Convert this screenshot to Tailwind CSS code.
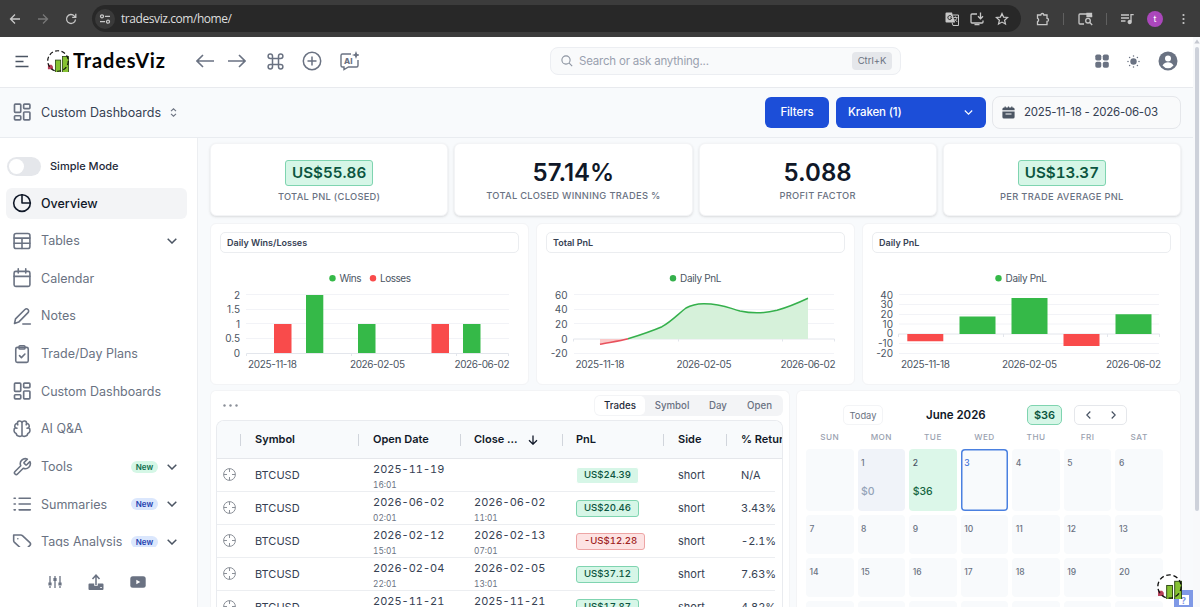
<!DOCTYPE html>
<html lang="en">
  <head>
    <meta charset="UTF-8" />
    <title>Overview - TradesViz</title>
    <script src="https://cdn.jsdelivr.net/npm/@tailwindcss/browser@4"></script>
  </head>
  <body class="flex h-[607px] w-[1200px] flex-col overflow-hidden bg-[#f8fafc] font-['Inter',sans-serif] text-gray-800">

    <!-- Shared symbols -->
    <svg class="hidden">
      <symbol id="logo" viewBox="0 0 24 24">
        <clipPath id="disc"><circle cx="12" cy="12" r="11.5" /></clipPath>
        <g clip-path="url(#disc)">
          <path d="M1 16h4l1.500 2v3H1z" fill="#b8405a" />
          <rect x="9.3" y="11" width="5.6" height="14" fill="#86c232" stroke="#2c4514" stroke-width=".9" />
          <rect x="17" y="7" width="6.5" height="18" fill="#86c232" stroke="#2c4514" stroke-width=".9" />
        </g>
        <circle cx="12" cy="12" r="11.2" fill="none" stroke="#111" stroke-width="1.300" stroke-dasharray="4.4 2.64" />
      </symbol>
      <symbol id="grid" viewBox="0 0 24 24" fill="none" stroke="currentColor" stroke-width="2" stroke-linejoin="round">
        <rect x="3" y="2.500" width="7.500" height="10" rx="1" /><rect x="14" y="2.500" width="7.500" height="5.500" rx="1" />
        <rect x="3" y="16.500" width="7.500" height="5" rx="1" /><rect x="14" y="12" width="7.500" height="9.500" rx="1" />
      </symbol>
    </svg>

    <!-- Browser bar -->
    <div class="flex h-[37px] shrink-0 items-center bg-[#3c3c3c] text-[#c7c7c7]">
      <svg class="ml-[9px] h-3 w-3" fill="none" stroke="currentColor" stroke-width="1.300" viewBox="0 0 12 12"><path d="M11 6H1.500M6 1.500L1.500 6 6 10.500" /></svg>
      <svg class="ml-[16px] h-3 w-3 text-[#777]" fill="none" stroke="currentColor" stroke-width="1.300" viewBox="0 0 12 12"><path d="M1 6h9.500M6 1.500L10.500 6 6 10.500" /></svg>
      <svg class="ml-[16px] h-3 w-3" fill="none" stroke="currentColor" stroke-width="1.300" viewBox="0 0 12 12"><path d="M10.500 6.500A4.500 4.500 0 1 1 9.300 2.900L10.700 4.200M10.800 .8v3.600H7.200" /></svg>
      <div class="ml-[15px] flex h-[27px] w-[929px] items-center rounded-full bg-[#282828] pl-[3px] pr-[12px]">
        <div class="flex h-5 w-5 items-center justify-center rounded-full bg-[#3a3a3a]">
          <svg class="h-3 w-3" fill="none" stroke="currentColor" stroke-width="1.300" viewBox="0 0 12 12"><circle cx="3" cy="3.300" r="1.500" /><path d="M6 3.300h5M1 8.700h5" /><circle cx="9" cy="8.700" r="1.500" /></svg>
        </div>
        <span class="ml-1.5 font-['Open_Sans',sans-serif] text-[12px] tracking-[-.43px] text-[#dedede]">tradesviz.com/home/</span>
        <svg class="ml-auto h-[14px] w-[14px]" viewBox="0 0 14 14"><path d="M1.500 .5h5.500l3 10H1.500a1 1 0 0 1-1-1v-8a1 1 0 0 1 1-1z" fill="#c7c7c7" /><path d="M6.600 4.600A2 2 0 1 0 6.800 6H5" fill="none" stroke="#282828" /><path d="M7.800 3h5.700v10.500H8L7 10.500" fill="none" stroke="#c7c7c7" /><path d="M8.500 5.500h4M10.500 4.500v1M12 5.500c-.5 2-1.500 3-3 4M9.500 7l2.700 3" fill="none" stroke="#c7c7c7" stroke-width=".9" /></svg>
        <svg class="ml-[11px] h-[14px] w-[14px]" fill="none" stroke="#c7c7c7" stroke-width="1.300" viewBox="0 0 14 14"><path d="M7 2H2a1 1 0 0 0-1 1v7a1 1 0 0 0 1 1h10a1 1 0 0 0 1-1V8.500M4.500 12.700h5M10.500 .5v6M8 4.300l2.500 2.500L13 4.300" /></svg>
        <svg class="ml-[11px] h-[14px] w-[14px]" fill="none" stroke="#c7c7c7" stroke-width="1.200" viewBox="0 0 14 14"><path d="M7 1.500l1.600 3.600 4 .4-3 2.700.9 3.900L7 10.100l-3.500 2 .9-3.900-3-2.700 4-.4z" /></svg>
      </div>
      <svg class="ml-[15px] h-[14px] w-[14px]" fill="none" stroke="currentColor" stroke-width="1.300" viewBox="0 0 14 14"><path d="M1.500 3h3.300a1.500 1.500 0 0 1 3 0H11v3.400a1.500 1.500 0 0 1 0 3V12.700H1.500V9.600a1.700 1.700 0 0 0 0-3.200z" /></svg>
      <div class="ml-[13px] h-3 w-px bg-[#606060]"></div>
      <svg class="ml-[14px] h-[14px] w-[15px]" fill="none" stroke="currentColor" stroke-width="1.300" viewBox="0 0 15 14"><path d="M6 12H2a1 1 0 0 1-1-1V3a1 1 0 0 1 1-1h10.500a1 1 0 0 1 1 1v2" /><path d="M9 1.500h4.500v3H9z" fill="currentColor" /><circle cx="10" cy="8.700" r="2.300" /><path d="M11.800 10.500l2.400 2.500" /></svg>
      <div class="ml-[13px] h-3 w-px bg-[#606060]"></div>
      <svg class="ml-[14px] h-3 w-[13px]" fill="none" stroke="currentColor" stroke-width="1.300" viewBox="0 0 13 12"><path d="M0 2h8M0 5h8M0 8h4.500M10 8.500V1.700h2.700" /><circle cx="8.700" cy="9" r="1.500" fill="currentColor" /></svg>
      <div class="ml-[13px] flex h-4 w-4 items-center justify-center rounded-full bg-[#ab47bc] text-[9px] leading-none text-white">t</div>
      <svg class="ml-[18px] h-3 w-[5px]" fill="currentColor" viewBox="0 0 5 12"><circle cx="2.500" cy="2" r="1.100" /><circle cx="2.500" cy="6" r="1.100" /><circle cx="2.500" cy="10" r="1.100" /></svg>
    </div>

    <div class="flex min-h-0 flex-1">
      <div class="flex w-[1193px] flex-col">

        <!-- Header -->
        <header class="flex h-[51px] shrink-0 items-center border-b border-[#e8eaee] bg-white pb-[2px] text-gray-500">
          <svg class="ml-[15px] h-[13px] w-[14px]" fill="none" stroke="#4b5563" stroke-width="1.700" viewBox="0 0 14 13"><path d="M.5 1.500h12.500M.5 6.500h8M.5 11.500h13" /></svg>
          <svg class="ml-[18px] h-[22px] w-[22px]"><use href="#logo" /></svg>
          <svg class="ml-1 h-6 w-[93px]"><text x="0" y="19" font-family="Lato, sans-serif" font-weight="700" font-size="20" fill="#050505" textLength="92">TradesViz</text></svg>
          <svg class="ml-[30px] h-[14px] w-[18px]" fill="none" stroke="currentColor" stroke-width="1.600" viewBox="0 0 18 14"><path d="M18 7H1M7 1L1 7l6 6" /></svg>
          <svg class="ml-[14px] h-[14px] w-[18px]" fill="none" stroke="currentColor" stroke-width="1.600" viewBox="0 0 18 14"><path d="M0 7h17M11 1l6 6-6 6" /></svg>
          <svg class="ml-[21px] h-[17px] w-[17px]" fill="none" stroke="currentColor" stroke-width="1.500" viewBox="0 0 17 17"><path d="M5.500 5.500h6v6h-6zM5.500 5.500H3.300a2.200 2.200 0 1 1 2.200-2.200zM11.500 5.500V3.300a2.200 2.200 0 1 1 2.200 2.200zM11.500 11.500h2.200a2.200 2.200 0 1 1-2.200 2.200zM5.500 11.500v2.200a2.200 2.200 0 1 1-2.200-2.200z" /></svg>
          <svg class="ml-[18px] h-5 w-5" fill="none" stroke="currentColor" stroke-width="1.500" viewBox="0 0 20 20"><circle cx="10" cy="10" r="8.700" /><path d="M10 5.500v9M5.500 10h9" /></svg>
          <svg class="ml-[17px] h-5 w-5" fill="none" stroke="currentColor" stroke-width="1.400" viewBox="0 0 20 20">
            <path d="M12 3H3.500A1.500 1.500 0 0 0 2 4.500v10A1.500 1.500 0 0 0 3.500 16H5v2.500L9.500 16h8a1.500 1.500 0 0 0 1.500-1.500V9" />
            <path d="M17 0l1.100 2.900L21 4l-2.900 1.100L17 8l-1.100-2.900L13 4l2.900-1.100z" fill="currentColor" stroke="none" />
            <text x="5" y="12.500" font-size="8" font-weight="800" fill="currentColor" stroke="none">AI</text>
          </svg>
          <div class="ml-[191px] flex h-[28px] w-[351px] items-center rounded-lg border border-[#eceef2] bg-[#f9fafb] pl-[10px] pr-[8px]">
            <svg class="h-3 w-3" fill="none" stroke="#8b93a0" stroke-width="1.100" viewBox="0 0 12 12"><circle cx="5" cy="5" r="4.100" /><path d="M8.200 8.200l3 3" /></svg>
            <span class="ml-[6px] pt-[2px] text-[11.500px] tracking-[-.2px] text-gray-400">Search or ask anything...</span>
            <span class="ml-auto flex h-[18px] w-10 items-center justify-center rounded bg-gray-200 pt-px text-[9.500px] text-gray-500">Ctrl+K</span>
          </div>
          <svg class="ml-[194px] h-[14px] w-[14px]" fill="currentColor" viewBox="0 0 14 14"><rect x=".3" y=".5" width="6" height="6" rx="1.700" /><rect x="7.800" y=".5" width="6" height="6" rx="1.700" /><rect x=".3" y="7.700" width="6" height="6" rx="1.700" /><rect x="7.800" y="7.700" width="6" height="6" rx="1.700" /></svg>
          <svg class="ml-[18px] h-[13px] w-[13px]" viewBox="0 0 13 13"><circle cx="6.500" cy="6.500" r="3.200" fill="currentColor" /><path d="M6.500 1h.01M6.500 12h.01M1 6.500h.01M12 6.500h.01M2.600 2.600h.01M10.400 2.600h.01M2.600 10.400h.01M10.400 10.400h.01" stroke="currentColor" stroke-width="1.500" stroke-linecap="round" /></svg>
          <svg class="ml-[18px] h-5 w-5" viewBox="0 0 20 20"><circle cx="10" cy="10" r="9.500" fill="currentColor" /><circle cx="10" cy="7.500" r="3" fill="#fff" /><path d="M4.500 14.500c1.300-2.300 3.300-3.200 5.500-3.200s4.200.9 5.500 3.200a7 7 0 0 1-11 0z" fill="#fff" /></svg>
        </header>

        <!-- Dashboard bar -->
        <div class="flex h-[50px] shrink-0 items-center border-b border-[#e9ecf0] pb-px">
          <svg class="ml-[12px] h-[20px] w-[20px] text-gray-500"><use href="#grid" /></svg>
          <span class="ml-[9px] pt-[2px] text-[12.500px] text-gray-700">Custom Dashboards</span>
          <svg class="ml-[9px] h-[9px] w-[7px]" fill="none" stroke="#6b7280" stroke-width="1.100" viewBox="0 0 7 9"><path d="M1 3.200L3.500 .8 6 3.200M1 5.800l2.500 2.400L6 5.800" /></svg>
          <button class="ml-auto h-[31px] w-[64px] rounded-md bg-[#1c4ed8] pt-[2px] text-[11.500px] font-medium tracking-[-.1px] text-white">Filters</button>
          <button class="ml-[7px] flex h-[31px] w-[150px] items-center justify-between rounded-md bg-[#1c4ed8] pl-3 pr-[13px] text-[11.500px] font-medium tracking-[-.15px] text-white">
            <span class="pt-[2px]">Kraken (1)</span>
            <svg class="h-[5px] w-[9px]" fill="none" stroke="currentColor" stroke-width="1.100" viewBox="0 0 9 5"><path d="M.8 .5l3.700 3.700L8.200 .5" /></svg>
          </button>
          <div class="mr-[12px] ml-[6px] flex h-[33px] w-[189px] items-center rounded-lg border border-gray-200 bg-[#f9fafb] pl-[9px]">
            <svg class="h-[13px] w-[13px]" viewBox="0 0 13 13"><path d="M2 1.500h9a1.600 1.600 0 0 1 1.600 1.500v1.300H.4V3A1.600 1.600 0 0 1 2 1.500zM.4 5.500h12.200v5.500a1.600 1.600 0 0 1-1.600 1.600H2A1.600 1.600 0 0 1 .4 11z" fill="#4b5563" /><path d="M3.200 .4v1.500M6.500 .4v1.500M9.800 .4v1.500" stroke="#4b5563" stroke-width="1.200" /><path d="M3.500 8h6" stroke="#fff" /></svg>
            <span class="ml-[9px] pt-[2px] text-[11.500px] tracking-[-.25px] text-gray-700">2025-11-18 - 2026-06-03</span>
          </div>
        </div>

        <div class="flex min-h-0 flex-1">

          <!-- Sidebar -->
          <aside class="flex w-[198px] shrink-0 flex-col border-r border-[#eceef1] bg-white">
            <div class="flex h-[55px] shrink-0 items-center pt-[1px] pl-[7px]">
              <div class="flex h-[19px] w-[34px] items-center rounded-full bg-gray-200 pl-[2px]"><div class="h-[15px] w-[15px] rounded-full bg-white"></div></div>
              <span class="ml-[9px] text-[11px] font-medium text-gray-800">Simple Mode</span>
            </div>
            <nav id="menu" class="-mt-[5.500px] flex h-[359px] shrink-0 flex-col gap-[6.350px] overflow-hidden pr-[10px] pl-[6px]"></nav>
            <div class="flex flex-1 items-center justify-center gap-[26px] pt-[10px] pr-[3px] text-gray-500">
              <svg class="h-[14px] w-[14px]" fill="none" stroke="currentColor" stroke-width="1.300" viewBox="0 0 14 14"><path d="M2 1v7M2 11v2M7 1v2M7 6v7M12 1v7M12 11v2" /><path d="M2 7.500v3M7 3v3M12 7.500v3" stroke-width="3.200" /></svg>
              <svg class="h-4 w-4" viewBox="0 0 16 16"><path d="M8 11V1.500M4.500 5L8 1.200 11.500 5" fill="none" stroke="currentColor" stroke-width="1.500" /><path d="M1.500 9.500h4.700v2.300h3.600V9.500h4.700a1 1 0 0 1 1 1V15a1 1 0 0 1-1 1h-13a1 1 0 0 1-1-1v-4.500a1 1 0 0 1 1-1z" fill="currentColor" /><path d="M12.300 13.500h1.500" stroke="#fff" /></svg>
              <svg class="h-[12px] w-4" viewBox="0 0 16 12"><rect x=".3" y=".3" width="15.400" height="11.400" rx="2.500" fill="currentColor" /><path d="M6.300 3.700v4.600L10.300 6z" fill="#fff" /></svg>
            </div>
          </aside>

          <!-- Main content -->
          <main class="flex min-w-0 flex-1 flex-col pt-[5px] pr-[12px] pl-[12px]">

            <section class="grid h-[73px] shrink-0 grid-cols-4 gap-[6px] text-center">
              <div class="flex flex-col items-center rounded-md border border-gray-100 bg-white pt-[16px] shadow-sm">
                <div class="flex h-[26px] items-center rounded-[3px] border border-[#7fd4b0] bg-[#d6f6e7] px-[6px] pt-px text-[15.200px] font-semibold text-[#0c5540] tabular-nums">US$55.86</div>
                <div class="mt-[4px] text-[9.300px] leading-[13px] font-medium tracking-[.3px] text-gray-500">TOTAL PNL (CLOSED)</div>
              </div>
              <div class="flex flex-col items-center rounded-md border border-gray-100 bg-white pt-[16px] shadow-sm">
                <div class="text-[24px] leading-[26px] font-semibold text-gray-900">57.14%</div>
                <div class="mt-[3px] text-[9.300px] leading-[13px] font-medium tracking-[.3px] text-gray-500">TOTAL CLOSED WINNING TRADES %</div>
              </div>
              <div class="flex flex-col items-center rounded-md border border-gray-100 bg-white pt-[16px] shadow-sm">
                <div class="text-[24px] leading-[26px] font-semibold text-gray-900">5.088</div>
                <div class="mt-[3px] text-[9.300px] leading-[13px] font-medium tracking-[.3px] text-gray-500">PROFIT FACTOR</div>
              </div>
              <div class="flex flex-col items-center rounded-md border border-gray-100 bg-white pt-[16px] shadow-sm">
                <div class="flex h-[26px] items-center rounded-[3px] border border-[#7fd4b0] bg-[#d6f6e7] px-[6px] pt-px text-[15.200px] font-semibold text-[#0c5540] tabular-nums">US$13.37</div>
                <div class="mt-[4px] text-[9.300px] leading-[13px] font-medium tracking-[.3px] text-gray-500">PER TRADE AVERAGE PNL</div>
              </div>
            </section>

            <!-- Charts -->
            <section class="mt-[7px] grid h-[162px] shrink-0 grid-cols-3 gap-[7px]">
              <div class="rounded-md border border-gray-100 bg-white pt-[8px]">
                <div class="mx-[9px] flex h-[21px] items-center rounded-[5px] border border-[#ebedf0] pl-[6px] text-[9px] font-semibold text-gray-700">Daily Wins/Losses</div>
                <svg class="h-[130px] w-[318px]" viewBox="211 253 318 130" font-size="10" fill="#4b5563">
                  <circle cx="332.500" cy="278.300" r="3.200" fill="#35b948" /><text x="339.500" y="281.500" textLength="22">Wins</text>
                  <circle cx="373" cy="278.300" r="3.200" fill="#f94b4b" /><text x="380" y="281.500" textLength="31">Losses</text>
                  <path d="M246 294.500h263M246 309.500h263M246 323.500h263M246 338.500h263" stroke="#f2f3f7" />
                  <path d="M246.500 356v-2.500h262v2.500M351.500 353v3M456.500 353v3" fill="none" stroke="#e3e6ec" />
                  <g text-anchor="end"><text x="240" y="298.500">2</text><text x="240" y="313">1.5</text><text x="240" y="327.500">1</text><text x="240" y="342.200">0.5</text><text x="240" y="356.700">0</text></g>
                  <path d="M274 324h17.500v29H274zM431.500 324H449v29h-17.500z" fill="#f94b4b" />
                  <path d="M306 295h17.300v58H306zM358 324h17.500v29H358zM463 324h17.500v29H463z" fill="#35b948" />
                  <text x="248" y="368" textLength="49">2025-11-18</text><text x="350" y="368" textLength="55">2026-02-05</text><text x="454.500" y="368" textLength="55">2026-06-02</text>
                </svg>
              </div>
              <div class="rounded-md border border-gray-100 bg-white pt-[8px]">
                <div class="mx-[9px] flex h-[21px] items-center rounded-[5px] border border-[#ebedf0] pl-[6px] text-[9px] font-semibold text-gray-700">Total PnL</div>
                <svg class="h-[130px] w-[318px]" viewBox="537 253 318 130" font-size="10" fill="#4b5563">
                  <circle cx="673" cy="278.300" r="3.200" fill="#35b04c" /><text x="680" y="281.500" textLength="41.500">Daily PnL</text>
                  <path d="M574 294.500h260M574 309.500h260M574 323.500h260M574 353.500h260" stroke="#f2f3f7" />
                  <path d="M573.500 341.500v-2.500h261v2.500M678.500 339v2.500M782.500 339v2.500" fill="none" stroke="#e3e6ec" />
                  <g text-anchor="end"><text x="567.500" y="298.500">60</text><text x="567.500" y="313">40</text><text x="567.500" y="327.700">20</text><text x="567.500" y="342.500">0</text><text x="567.500" y="356.800">-20</text></g>
                  <path d="M600 339v5.300C609 342.500 620 341 628 339z" fill="#fbc9c9" />
                  <path d="M628 339C640 335 652 331 662 326.700C672 321 678 314 686 308C692 304.500 697 303.800 703.500 303.700C722 303.500 730 308.500 740 311C750 313.200 763 313.800 777 310.300C789 307 798 303 808 298.300V339z" fill="#d6f1da" />
                  <path d="M600 344.300C609 342.500 620 341 628 338.800" fill="none" stroke="#e8505b" stroke-width="1.500" />
                  <path d="M628 338.800C640 335 652 331 662 326.700C672 321 678 314 686 308C692 304.500 697 303.800 703.500 303.700C722 303.500 730 308.500 740 311C750 313.200 763 313.800 777 310.300C789 307 798 303 808 298.300" fill="none" stroke="#35b04c" stroke-width="1.500" />
                  <text x="575.500" y="368" textLength="49">2025-11-18</text><text x="676.500" y="368" textLength="55">2026-02-05</text><text x="780.500" y="368" textLength="55">2026-06-02</text>
                </svg>
              </div>
              <div class="rounded-md border border-gray-100 bg-white pt-[8px]">
                <div class="mx-[9px] flex h-[21px] items-center rounded-[5px] border border-[#ebedf0] pl-[6px] text-[9px] font-semibold text-gray-700">Daily PnL</div>
                <svg class="h-[130px] w-[318px]" viewBox="863 253 318 130" font-size="10" fill="#4b5563">
                  <circle cx="998.500" cy="278.300" r="3.200" fill="#35b948" /><text x="1005.500" y="281.500" textLength="41.500">Daily PnL</text>
                  <path d="M899 294.500h260M899 304.500h260M899 314.500h260M899 324h260M899 343.500h260M899 353.500h260" stroke="#f2f3f7" />
                  <path d="M898.500 337v-3h261v3M1003.500 334v3M1107.500 334v3" fill="none" stroke="#e3e6ec" />
                  <g text-anchor="end"><text x="893" y="298.500">40</text><text x="893" y="308.300">30</text><text x="893" y="318">20</text><text x="893" y="327.700">10</text><text x="893" y="337.300">0</text><text x="893" y="347">-10</text><text x="893" y="356.700">-20</text></g>
                  <path d="M907.300 334h36v7.300h-36zM1063.500 334h36v12h-36z" fill="#f94b4b" />
                  <path d="M959.500 316.500h36V334h-36zM1011.500 298h36v36h-36zM1115.500 314.200h36V334h-36z" fill="#35b948" />
                  <text x="901" y="368" textLength="49">2025-11-18</text><text x="1002" y="368" textLength="55">2026-02-05</text><text x="1106" y="368" textLength="55">2026-06-02</text>
                </svg>
              </div>
            </section>

            <section class="mt-[5px] flex min-h-0 flex-1 gap-[6px]">

              <!-- Trades table -->
              <div class="flex w-[580px] flex-col rounded-t-md border border-b-0 border-gray-100 bg-white pr-[6px] pl-[5px]">
                <div class="flex h-[29px] shrink-0 items-center justify-between pl-[7px]">
                  <svg class="h-[3px] w-[15px]" fill="#8a8f98" viewBox="0 0 15 3"><circle cx="1.500" cy="1.500" r="1.200" /><circle cx="7.500" cy="1.500" r="1.200" /><circle cx="13.500" cy="1.500" r="1.200" /></svg>
                  <div class="flex h-[21px] items-center rounded-md bg-gray-100 p-px text-[9.700px] font-medium text-gray-500">
                    <span class="flex h-[19px] w-[50px] items-center justify-center rounded-[5px] bg-white pt-[2px] text-gray-800">Trades</span>
                    <span class="w-[54px] pt-[2px] text-center">Symbol</span>
                    <span class="w-[38px] pt-[2px] text-center">Day</span>
                    <span class="w-[45px] pt-[2px] text-center">Open</span>
                  </div>
                </div>
                <div class="min-h-0 flex-1 overflow-hidden rounded-t-lg border border-b-0 border-[#e9ebef]">
                  <div class="flex h-[38px] items-center border-b border-gray-200 bg-[#f8fafc] text-[11px] font-semibold text-gray-900">
                    <span class="h-3 w-[24px] shrink-0 border-r border-gray-300"></span>
                    <span class="flex h-3 w-[118px] shrink-0 items-center border-r border-gray-300 pl-[14px]">Symbol</span>
                    <span class="flex h-3 w-[102px] shrink-0 items-center border-r border-gray-300 pl-[14px]">Open Date</span>
                    <span class="flex h-3 w-[102px] shrink-0 items-center border-r border-gray-300 pl-[13px]">Close ...
                      <svg class="ml-[10px] h-[10px] w-[10px]" fill="none" stroke="currentColor" stroke-width="1.300" viewBox="0 0 10 10"><path d="M5 .5v8.500M1 5.200l4 4 4-4" /></svg>
                    </span>
                    <span class="flex h-3 w-[101px] shrink-0 items-center border-r border-gray-300 pl-[13px]">PnL</span>
                    <span class="flex h-3 w-[63px] shrink-0 items-center border-r border-gray-300 pl-[14px]">Side</span>
                    <span class="shrink-0 pl-[14px]">% Return</span>
                  </div>
                  <div id="trades" class="pr-[7px]"></div>
                </div>
              </div>

              <!-- Calendar -->
              <div class="flex flex-1 flex-col overflow-hidden rounded-t-md border border-b-0 border-gray-100 bg-white pl-[9px]">
                <div class="mt-[14px] flex h-[20px] shrink-0 items-center pl-[37px]">
                  <span class="flex h-[20px] w-[40px] items-center justify-center rounded-[5px] border border-gray-100 pt-px text-[9.300px] text-gray-500">Today</span>
                  <span class="ml-[43px] w-[60px] pt-[2px] text-[11.500px] font-semibold whitespace-nowrap text-gray-900">June 2026</span>
                  <span class="ml-[41px] flex h-[20px] w-[35px] items-center justify-center rounded-[5px] border border-[#7fd4b0] bg-[#d6f6e7] text-[11px] font-semibold text-[#0c5540]">$36</span>
                  <span class="ml-[12px] flex h-[20px] w-[53px] items-center justify-center gap-[20px] rounded-[5px] border border-gray-200 text-gray-600">
                    <svg class="h-[8px] w-[5px]" fill="none" stroke="currentColor" stroke-width="1.200" viewBox="0 0 5 8"><path d="M4.300 .5L.8 4l3.500 3.500" /></svg>
                    <svg class="h-[8px] w-[5px]" fill="none" stroke="currentColor" stroke-width="1.200" viewBox="0 0 5 8"><path d="M.7 .5L4.200 4 .7 7.500" /></svg>
                  </span>
                </div>
                <div class="mt-[5px] grid h-[14px] w-[357px] shrink-0 grid-cols-7 gap-[4px] text-center text-[8.200px] leading-[14px] font-medium tracking-[.5px] text-gray-400">
                  <span>SUN</span><span>MON</span><span>TUE</span><span>WED</span><span>THU</span><span>FRI</span><span>SAT</span>
                </div>
                <div id="days" class="mt-[5px] grid w-[357px] shrink-0 grid-cols-7 grid-rows-[62px_39px_39px_39px] gap-[4px]"></div>
              </div>
            </section>
          </main>
        </div>
      </div>

      <!-- Page scrollbar -->
      <div class="flex w-[7px] flex-col items-center bg-[#f8f9fb]">
        <svg class="mt-[2px] h-[5px] w-[6px]" viewBox="0 0 6 5"><path d="M3 .5L5.800 4.500H.2z" fill="#c5c8d0" /></svg>
        <div class="mt-[3px] h-[464px] w-[4px] rounded-full bg-[#cdd1da]"></div>
      </div>
    </div>

    <!-- Floating help widget -->
    <div class="absolute top-[590px] left-[1174px] flex h-[17px] w-[19px] items-center justify-center overflow-hidden bg-[#7f99e6]">
      <span class="mt-[3px] flex h-[10px] w-[10px] items-center justify-center bg-white text-[9px] leading-none font-bold text-[#7f99e6]">?</span>
    </div>
    <svg class="absolute top-[574px] left-[1157px] h-[25px] w-[25px]"><circle cx="12.500" cy="12.500" r="12" fill="#fff" /><use href="#logo" /></svg>

    <script>
      const icons = {
        pie: '<circle cx="12" cy="12" r="10" /><path d="M12 2v10h10" />',
        table: '<rect x="2.500" y="3" width="19" height="18" rx="2.500" /><path d="M2.500 8.500h19M2.500 14.700h19M12 8.500V21" />',
        calendar: '<rect x="2.500" y="4" width="19" height="18" rx="2" /><path d="M2.500 10h19M7.500 1v5M16.500 1v5" />',
        pen: '<path d="M3 21l1.200-5.500L15.500 4.200a2.500 2.500 0 0 1 3.700 3.700L8 19.300zM13 21.500h9" />',
        clipboard: '<rect x="4.500" y="4" width="15" height="18" rx="2" /><rect x="8.500" y="2" width="7" height="4" rx="1" /><path d="M9 14l2.300 2.300L15.500 12" />',
        brain: '<path d="M12 4v16M12 4.500C11 1.500 6.500 1.800 6.500 5C3.500 5.500 2.500 8.500 4 10.500C1.500 12 2 16.500 5 17.300C5.500 21.500 11 21.500 12 19.500C13 21.500 18.500 21.500 19 17.300C22 16.500 22.500 12 20 10.500C21.500 8.500 20.500 5.500 17.500 5C17.500 1.800 13 1.500 12 4.500M6.500 5l.5 2M17.500 5L17 7M4 10.500l2 .5M20 10.500l-2 .5" />',
        wrench: '<path d="M14.700 6.300a1 1 0 0 0 0 1.400l1.600 1.600a1 1 0 0 0 1.400 0l3.770-3.770a6 6 0 0 1-7.940 7.940l-6.910 6.910a2.120 2.120 0 0 1-3-3l6.910-6.910a6 6 0 0 1 7.940-7.940z" />',
        list: '<path d="M8.500 5H22M8.500 12H22M8.500 19H22M2.500 5h1.500M2.500 12h1.500M2.500 19h1.500" />',
        tag: '<path d="M2 3.500h8.500a3 3 0 0 1 2 .8l9 8.500a2.300 2.300 0 0 1 0 3.200L16 21.500a2.300 2.300 0 0 1-3.200 0L3 12.500a3 3 0 0 1-1-2zM7 8h.01" />',
      };

      const menu = [
        { label: 'Overview', icon: 'pie', active: true },
        { label: 'Tables', icon: 'table', more: true },
        { label: 'Calendar', icon: 'calendar' },
        { label: 'Notes', icon: 'pen' },
        { label: 'Trade/Day Plans', icon: 'clipboard' },
        { label: 'Custom Dashboards', icon: 'grid' },
        { label: 'AI Q&amp;A', icon: 'brain' },
        { label: 'Tools', icon: 'wrench', badge: 'bg-[#d5f7e6] text-[#0c6b4a]', more: true },
        { label: 'Summaries', icon: 'list', badge: 'bg-[#dbe7fd] text-[#1e40af]', more: true },
        { label: 'Tags Analysis', icon: 'tag', badge: 'bg-[#dbe7fd] text-[#1e40af]', more: true },
      ];

      document.getElementById('menu').innerHTML = menu.map(item => `
        <a class="flex h-[31.300px] shrink-0 items-center rounded-md pl-[6px] pr-[10px] text-[12.500px] ${
          item.active ? 'bg-gray-100 font-medium text-gray-900' : 'text-gray-500'
        }">
          ${item.icon === 'grid'
            ? '<svg class="h-5 w-5"><use href="#grid" /></svg>'
            : `<svg class="h-5 w-5" fill="none" stroke="currentColor" stroke-width="1.900" stroke-linecap="round" stroke-linejoin="round" viewBox="0 0 24 24">${icons[item.icon]}</svg>`}
          <span class="ml-[9px] pt-[1.500px] whitespace-nowrap">${item.label}</span>
          <span class="ml-auto flex items-center gap-[9px]">
            ${item.badge ? `<span class="flex h-[12px] w-[27px] items-center justify-center rounded-full text-[8px] font-semibold ${item.badge}">New</span>` : ''}
            ${item.more ? '<svg class="h-[6px] w-[10px]" fill="none" stroke="#4b5563" stroke-width="1.500" viewBox="0 0 10 6"><path d="M.7 .7L5 5 9.300 .7" /></svg>' : ''}
          </span>
        </a>`).join('');

      const green = 'border-[#7fd4b0] bg-[#d6f6e7] text-[#0c5540]';
      const red = 'border-[#eda5a5] bg-[#fde3e3] text-[#9f2424]';
      const trades = [
        ['2025-11-19', '16:01', '', '', 'US$24.39', 'N/A', 'border-white bg-[#d6f6e7] text-[#0c5540]'],
        ['2026-06-02', '02:01', '2026-06-02', '11:01', 'US$20.46', '3.43%', green],
        ['2026-02-12', '15:01', '2026-02-13', '07:01', '-US$12.28', '-2.1%', red],
        ['2026-02-04', '22:01', '2026-02-05', '13:01', 'US$37.12', '7.63%', green],
        ['2025-11-21', '10:01', '2025-11-21', '18:01', 'US$17.87', '4.82%', green],
      ];

      document.getElementById('trades').innerHTML = trades.map(t => `
        <div class="flex h-[33px] items-center border-b border-[#eceef1] text-[11px] text-gray-700 tabular-nums">
          <span class="flex w-[24px] shrink-0 justify-center pl-[1px] pb-[1px]">
            <svg class="h-[13px] w-[13px]" fill="none" stroke="#8b9098" stroke-width="1" viewBox="0 0 13 13"><circle cx="6.500" cy="6.500" r="5.900" /><path d="M6.500 .5v3.500M6.500 9v3.500M.5 6.500H4M9 6.500h3.500" /></svg>
          </span>
          <span class="w-[118px] shrink-0 pl-[14px]">BTCUSD</span>
          <span class="w-[102px] shrink-0 pt-[4px] pl-[14px] leading-[15px]">${t[0]}<small class="block text-[8.300px] leading-[16px] text-gray-500">${t[1]}</small></span>
          <span class="w-[102px] shrink-0 pt-[4px] pl-[13px] leading-[15px]">${t[2]}<small class="block text-[8.300px] leading-[16px] text-gray-500">${t[3]}</small></span>
          <span class="w-[101px] shrink-0 pl-[13px]"><span class="inline-flex h-[17px] items-center rounded-[3px] border px-[7px] text-[9.600px] font-medium ${t[6]}">${t[4]}</span></span>
          <span class="w-[63px] shrink-0 pl-[14px]">short</span>
          <span class="shrink-0 pl-[14px]">${t[5]}</span>
        </div>`).join('');

      const days = document.getElementById('days');
      for (let d = 0; d <= 27; d++) {
        let style = 'bg-[#f8fafc] text-gray-500';
        if (d === 1) style = 'bg-[#f0f3f9] text-gray-500';
        if (d === 2) style = 'bg-[#dcf7e9] text-gray-600';
        if (d === 3) style = 'bg-[#f8fafc] text-[#3b6fd8] ring-[1.500px] ring-inset ring-[#4a80e0]';
        const pnl = d === 1 ? '<div class="mt-[15px] text-[10.500px] text-[#94a3b8]">$0</div>'
          : d === 2 ? '<div class="mt-[15px] text-[10.500px] font-medium text-[#14653f]">$36</div>' : '';
        days.innerHTML += `<div class="rounded pt-[7px] pl-[3.500px] text-[8.500px] leading-[14px] font-medium ${style}">${d || ''}${pnl}</div>`;
      }
    </script>
  </body>
</html>
